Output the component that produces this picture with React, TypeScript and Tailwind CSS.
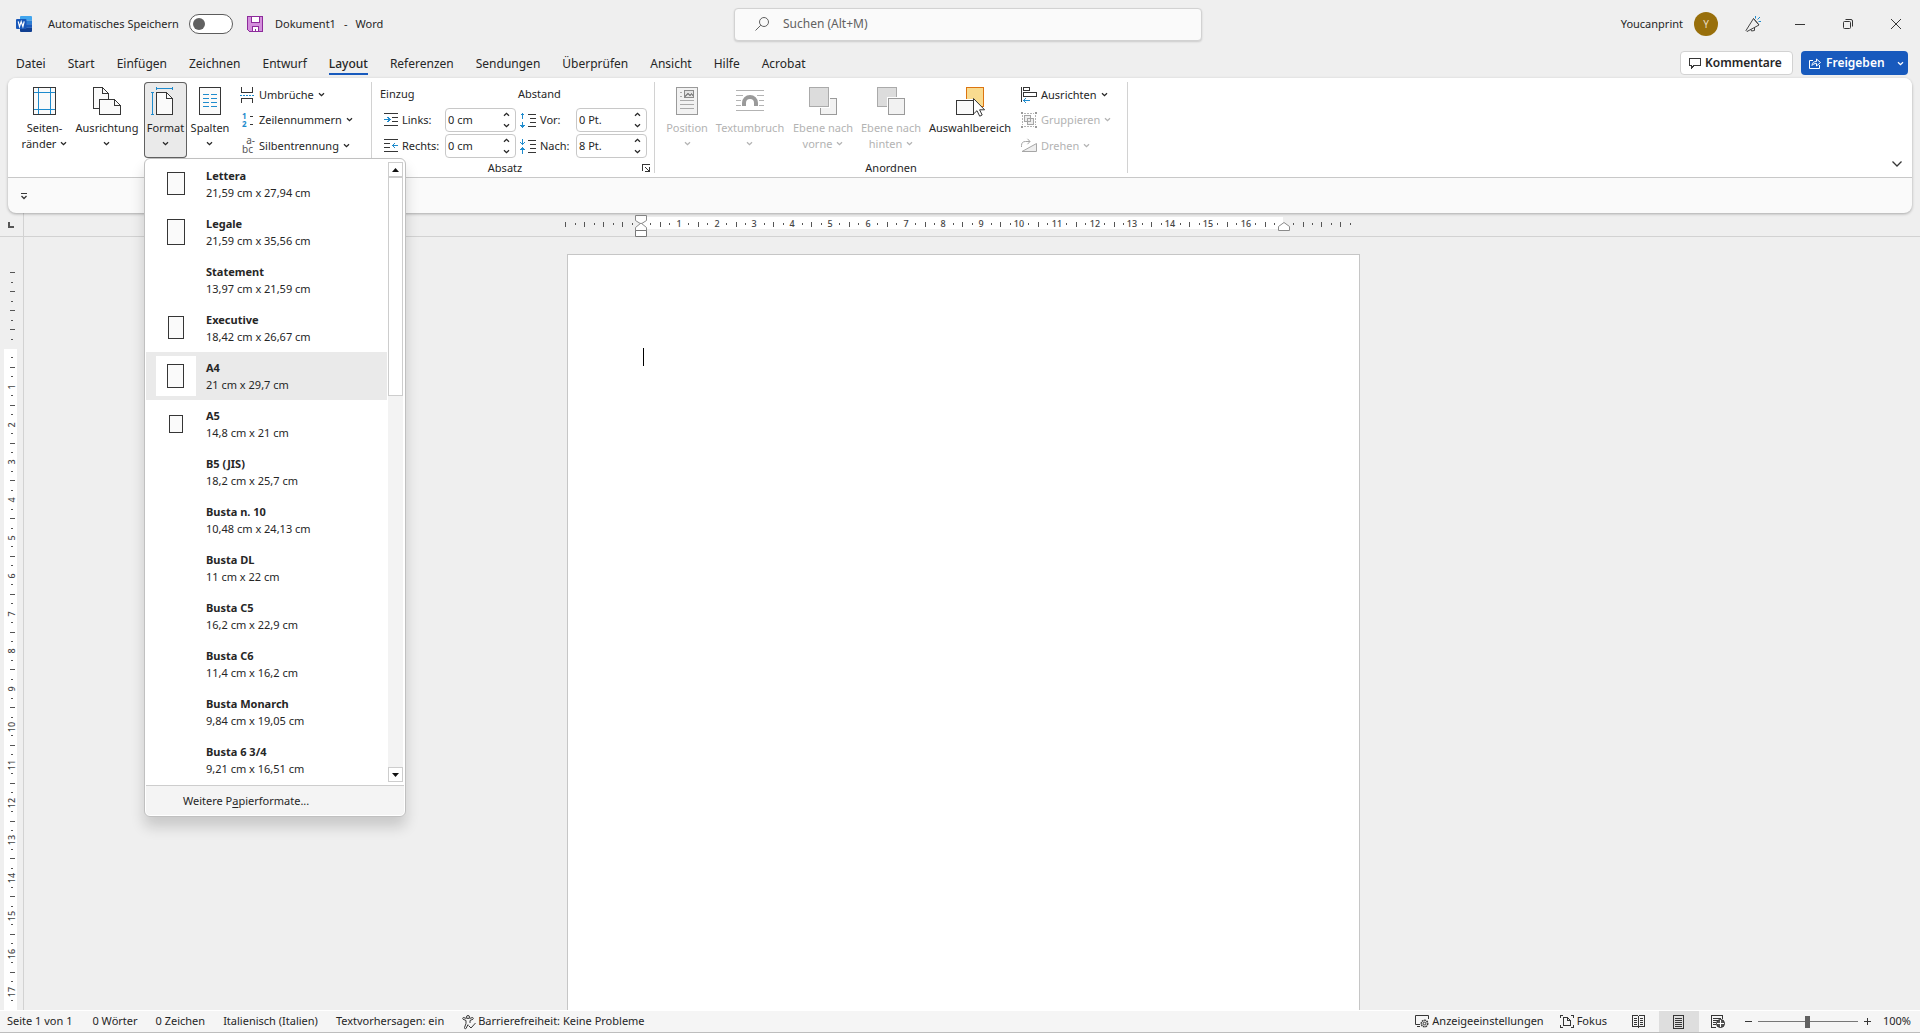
import clsx from "clsx";
import type { ReactNode } from "react";

const INK = "#363636";
const BLUE = "#1e8bcd";

const TABS = [
  "Datei",
  "Start",
  "Einfügen",
  "Zeichnen",
  "Entwurf",
  "Layout",
  "Referenzen",
  "Sendungen",
  "Überprüfen",
  "Ansicht",
  "Hilfe",
  "Acrobat",
];

interface PaperSize {
  name: string;
  size: string;
  icon?: [number, number];
}

const PAPER_SIZES: PaperSize[] = [
  { name: "Lettera", size: "21,59 cm x 27,94 cm", icon: [18, 23] },
  { name: "Legale", size: "21,59 cm x 35,56 cm", icon: [18, 26] },
  { name: "Statement", size: "13,97 cm x 21,59 cm" },
  { name: "Executive", size: "18,42 cm x 26,67 cm", icon: [16, 23] },
  { name: "A4", size: "21 cm x 29,7 cm", icon: [17, 24] },
  { name: "A5", size: "14,8 cm x 21 cm", icon: [14, 18] },
  { name: "B5 (JIS)", size: "18,2 cm x 25,7 cm" },
  { name: "Busta n. 10", size: "10,48 cm x 24,13 cm" },
  { name: "Busta DL", size: "11 cm x 22 cm" },
  { name: "Busta C5", size: "16,2 cm x 22,9 cm" },
  { name: "Busta C6", size: "11,4 cm x 16,2 cm" },
  { name: "Busta Monarch", size: "9,84 cm x 19,05 cm" },
  { name: "Busta 6 3/4", size: "9,21 cm x 16,51 cm" },
];

/* ---------- icons ---------- */

function Icon({
  w,
  h,
  children,
  crisp = true,
}: {
  w: number;
  h: number;
  children: ReactNode;
  crisp?: boolean;
}) {
  return (
    <svg
      width={w}
      height={h}
      viewBox={`0 0 ${w} ${h}`}
      fill="none"
      stroke={INK}
      shapeRendering={crisp ? "crispEdges" : "auto"}
      className="shrink-0 overflow-visible"
      aria-hidden="true"
    >
      {children}
    </svg>
  );
}

function Chevron({ up = false, className }: { up?: boolean; className?: string }) {
  return (
    <svg
      width="7"
      height="5"
      viewBox="0 0 7 5"
      fill="none"
      stroke="currentColor"
      strokeWidth="1.3"
      className={clsx("inline-block shrink-0", className)}
      aria-hidden="true"
    >
      <path d={up ? "M1 3.8 3.5 1.3 6 3.8" : "M1 1.2 3.5 3.7 6 1.2"} />
    </svg>
  );
}

const WordLogo = () => (
  <svg width="16" height="16" viewBox="0 0 16 16" className="shrink-0" aria-hidden="true">
    <path d="M4 1a1 1 0 0 1 1-1h10a1 1 0 0 1 1 1v3.5H4z" fill="#41a5ee" />
    <path d="M4 4.500h12v3.700H4z" fill="#2b7cd3" />
    <path d="M4 8.200h12v3.600H4z" fill="#185abd" />
    <path d="M4 11.800h12V15a1 1 0 0 1-1 1H5a1 1 0 0 1-1-1z" fill="#103f91" />
    <rect x="0" y="3" width="10.500" height="10" rx="1" fill="#1857b8" />
    <path d="m2.200 5.300 1.300 5.300 1.700-5 1.700 5 1.300-5.300" fill="none" stroke="#fff" strokeWidth="1.200" />
  </svg>
);

const SaveIcon = () => (
  <Icon w={16} h={16}>
    <path d="M.5.500h15v15h-13l-2-2z" fill="#d48fdc" stroke="#8d2b9b" />
    <path d="M4.500.500h8v6h-8z" fill="#fff" stroke="#8d2b9b" />
    <path d="M5.500 10.500h6v5h-6z" fill="#fff" stroke="#8d2b9b" />
    <path d="M8.500 12.500v3" stroke="#8d2b9b" />
  </Icon>
);

const MarginsIcon = () => (
  <Icon w={23} h={28}>
    <path d="M.5.500h22v27H.5z" fill="#fafafa" />
    <path d="M5.500 1v26M17.500 1v26M1 5.500h21M1 22.500h21" stroke={BLUE} />
  </Icon>
);

const OrientationIcon = () => (
  <Icon w={28} h={28}>
    <path d="M6 21.500H.5V.500h9l6 6V12" fill="#fafafa" />
    <path d="M9.500.500v6h6" />
    <path d="M6.500 12.500h15l6 6v9h-21z" fill="#fafafa" />
    <path d="M21.500 12.500v6h6" />
  </Icon>
);

const SizeIcon = () => (
  <Icon w={29} h={28}>
    <path d="M5.500 5.500h10l6 6v16h-16z" fill="#fafafa" />
    <path d="M15.500 5.500v6h6" />
    <path d="M5 1.500h17M5.500 0v3M21.500 0v3M1.500 5v23M0 5.500h3M0 27.500h3" stroke={BLUE} />
  </Icon>
);

const ColumnsIcon = () => (
  <Icon w={22} h={28}>
    <path d="M.5.500h21v27H.5z" fill="#fafafa" />
    <path
      d="M4 7.500h6M12 7.500h6M4 11.500h6M12 11.500h6M4 15.500h6M12 15.500h6M4 19.500h6M12 19.500h6"
      stroke={BLUE}
    />
  </Icon>
);

const BreaksIcon = () => (
  <Icon w={15} h={16}>
    <path d="M1.500 0v5.500h11V0M1.500 16v-4.500h11V16" />
    <path d="M0 8.500h14" stroke={BLUE} strokeDasharray="2 1" />
  </Icon>
);

const LineNumbersIcon = () => (
  <span className="flex w-[15px] justify-between pr-0.5 text-[8px] leading-2 font-bold text-[#1e8bcd]">
    <span className="flex flex-col pl-0.5">
      <span>1</span>
      <span>2</span>
    </span>
    <Icon w={4} h={16}>
      <path d="M1 4.500h3M1 12.500h3" />
    </Icon>
  </span>
);

const HyphenIcon = () => (
  <span className="flex w-[15px] flex-col text-[10px] leading-[9px] text-[#555]">
    <span className="text-right">a-</span>
    <span>bc</span>
  </span>
);

const IndentLeftIcon = () => (
  <Icon w={14} h={14}>
    <path d="M0 .500h14M8 4.500h6M8 8.500h6M0 12.500h14" />
    <path d="M0 6.500h6M3.500 4l2.500 2.500L3.500 9" stroke={BLUE} />
  </Icon>
);

const IndentRightIcon = () => (
  <Icon w={14} h={14}>
    <path d="M0 .500h14M0 4.500h6M0 8.500h6M0 12.500h14" />
    <path d="M14 6.500H8.500M11 4 8.500 6.500 11 9" stroke={BLUE} />
  </Icon>
);

const SpaceBeforeIcon = () => (
  <Icon w={16} h={14}>
    <path d="M8 1.500h8M10 5.500h6M10 9.500h6M8 13.500h8" />
    <path d="M2.500 6V.500M.5 2.500l2-2 2 2M2.500 9v5.500M.5 12l2 2 2-2" stroke={BLUE} />
  </Icon>
);

const SpaceAfterIcon = () => (
  <Icon w={16} h={14}>
    <path d="M8 1.500h8M10 5.500h6M10 9.500h6M8 13.500h8" />
    <path d="M2.500 0v5.500M.5 3.500l2 2 2-2M2.500 14.500V9M.5 11l2-2 2 2" stroke={BLUE} />
  </Icon>
);

const PositionIcon = () => (
  <Icon w={22} h={28}>
    <path d="M.5.500h21v27H.5z" fill="#f2f2f2" stroke="#9a9a9a" />
    <path d="M8.500 3.500h9v7h-9z" fill="#e2e2e2" stroke="#8a8a8a" />
    <path d="m9 9.500 3-3 2 2 1.500-1.500 2 2.500" stroke="#8a8a8a" />
    <path d="M4 5.500h2M4 9.500h2M4 13.500h14M4 17.500h14M4 21.500h14" stroke="#aaa" />
  </Icon>
);

const WrapIcon = () => (
  <Icon w={28} h={28}>
    <path d="M0 3.500h28M0 8.500h7M21 8.500h7M0 13.500h5M23 13.500h5M0 18.500h5M23 18.500h5M0 23.500h28" stroke="#b3b3b3" />
    <path
      d="M8 19v-3a6 6 0 0 1 12 0v3"
      stroke="#9a9a9a"
      strokeWidth="4"
      shapeRendering="auto"
    />
  </Icon>
);

const BringForwardIcon = () => (
  <Icon w={28} h={28}>
    <path d="M11.500 11.500h16v16h-16z" fill="#f2f2f2" stroke="#9a9a9a" />
    <path d="M0 0h21v21H0z" fill="#fff" stroke="none" />
    <path d="M.5.500h19v19H.5z" fill="#dcdcdc" stroke="#aaa" />
  </Icon>
);

const SendBackwardIcon = () => (
  <Icon w={28} h={28}>
    <path d="M.5.500h19v19H.5z" fill="#dcdcdc" stroke="#aaa" />
    <path d="M10 10h18v18H10z" fill="#fff" stroke="none" />
    <path d="M11.500 11.500h16v16h-16z" fill="#f2f2f2" stroke="#9a9a9a" />
  </Icon>
);

const SelectionPaneIcon = () => (
  <Icon w={29} h={28}>
    <path d="M10.500.500h17v19h-17z" fill="#f9db8f" stroke="#dc7410" />
    <path d="M0 12h19v17H0z" fill="#fff" stroke="none" />
    <path d="M.5 13.500h17v14H.5z" fill="#fafafa" />
    <path
      d="M17.500 11.500v15.500l3.500-3.300 2.700 5.500 2.500-1.200-2.600-5.200h5z"
      fill="#fff"
      shapeRendering="auto"
    />
  </Icon>
);

const AlignIcon = () => (
  <Icon w={16} h={16}>
    <path d="M.5 0v15M2.500.500h6v3h-6zM2.500 5.500h13v4h-13z" />
    <path d="M2.500 13.500H9M5 11l-2.500 2.500L5 16" stroke={BLUE} />
  </Icon>
);

const GroupIcon = () => (
  <Icon w={16} h={16}>
    <path d="M3 1.500h10M3 14.500h10M1.500 3v10M14.500 3v10" stroke="#b3b3b3" strokeDasharray="2 1" />
    <path d="M3.500 3.500h6v6h-6zM6.500 6.500h6v6h-6z" fill="#eee" stroke="#a6a6a6" />
    <path d="M0 1h2M14 1h2M0 15h2M14 15h2" stroke="#9a9a9a" strokeWidth="2" />
  </Icon>
);

const RotateIcon = () => (
  <Icon w={16} h={14} crisp={false}>
    <path d="M1 13.500h14.500v-8z" fill="#eee" stroke="#a6a6a6" />
    <path d="M.5 9V7.500a4 4 0 0 1 4-4H9M6.500.800 9 3.500 6.500 6.200" stroke="#a6a6a6" />
  </Icon>
);

/* ---------- title bar ---------- */

function TitleBar() {
  return (
    <header className="flex h-12 shrink-0 items-center pl-4">
      <div className="flex flex-1 items-center">
        <WordLogo />
        <label htmlFor="autosave" className="ml-4 w-[141px]">
          Automatisches Speichern
        </label>
        <input
          id="autosave"
          type="checkbox"
          role="switch"
          className="h-5 w-11 appearance-none rounded-full border border-[#5c5c5c] bg-white p-[3px] before:block before:size-3 before:rounded-full before:bg-[#616161]"
        />
        <button type="button" aria-label="Speichern" className="mr-3 ml-3.5">
          <SaveIcon />
        </button>
        <h1 className="flex gap-2 pt-px">
          <span>Dokument1</span>
          <span>-</span>
          <span>Word</span>
        </h1>
      </div>
      <div className="flex h-[33px] w-[468px] items-center gap-3.5 rounded-[4px] border border-[#d2d2d2] bg-[#fafafa] px-5 shadow-[0_1px_2px_rgba(0,0,0,0.15)]">
        <Icon w={14} h={14} crisp={false}>
          <circle cx="9" cy="5" r="4.500" stroke="#616161" />
          <path d="M5.800 8.200.500 13.500" stroke="#616161" />
        </Icon>
        <input
          type="search"
          aria-label="Suchen"
          placeholder="Suchen (Alt+M)"
          className="min-w-0 flex-1 bg-transparent text-[12px] outline-none placeholder:text-[#616161]"
        />
      </div>
      <div className="flex flex-1 items-center justify-end">
        <span>Youcanprint</span>
        <button
          type="button"
          aria-label="Konto"
          className="mr-[27px] ml-[11px] size-6 rounded-full bg-[#986f0b] text-[10px] text-[#e9dcc0]"
        >
          Y
        </button>
        <button type="button" aria-label="Demnächst verfügbar" className="mr-[15px]">
          <Icon w={16} h={16} crisp={false}>
            <path d="M8.500 2.500 1 14.500l1 1 12-6.500zM8.500 2.500l5.500 6.500M6 13.500l.500 1.500 3-.500V11.500" stroke="#444" />
            <path d="M10.500 0v2.500M12.500 3.500l2.500-2.500M13.500 5.500H16" stroke={BLUE} />
          </Icon>
        </button>
        <button type="button" aria-label="Minimieren" className="flex h-12 w-12 items-center justify-center">
          <Icon w={10} h={1}>
            <path d="M0 .500h10" />
          </Icon>
        </button>
        <button type="button" aria-label="Verkleinern" className="flex h-12 w-12 items-center justify-center">
          <Icon w={10} h={10} crisp={false}>
            <rect x=".5" y="2.500" width="7" height="7" rx="1" />
            <path d="M2.500.500H8A1.500 1.500 0 0 1 9.500 2v5.500" />
          </Icon>
        </button>
        <button type="button" aria-label="Schließen" className="flex h-12 w-12 items-center justify-center">
          <Icon w={10} h={10} crisp={false}>
            <path d="m0 0 10 10M10 0 0 10" />
          </Icon>
        </button>
      </div>
    </header>
  );
}

function TabRow() {
  return (
    <div className="flex h-[30px] shrink-0 items-start justify-between pr-3 pl-4">
      <nav className="flex gap-[22px] text-[12px]">
        {TABS.map((tab) => (
          <button
            key={tab}
            type="button"
            className={clsx(
              "flex h-[27px] items-center border-b-2 pt-[6px]",
              tab === "Layout"
                ? "border-[#185abd] font-medium"
                : "border-transparent",
            )}
          >
            {tab}
          </button>
        ))}
      </nav>
      <div className="flex gap-2 pt-[3px] text-[12px] font-semibold">
        <button
          type="button"
          className="flex h-6 w-[113px] items-center gap-1 rounded-[4px] border border-[#d2d2d2] bg-white pl-2"
        >
          <Icon w={12} h={11}>
            <path d="M.5.500h11v7H5l-2.500 2.500V7.500h-2z" />
          </Icon>
          Kommentare
        </button>
        <button
          type="button"
          className="flex h-6 w-[107px] items-center gap-[5px] rounded-[4px] bg-[#185abd] px-2 text-white"
        >
          <Icon w={12} h={12} crisp={false}>
            <path d="M4 3.500H.5v8h10V8" stroke="#fff" />
            <path d="M3 8.500c0-3 2-4 4.500-4V2l4 3.500-4 3.500V6.500C5.500 6.500 4 7 3 8.500z" stroke="#fff" />
          </Icon>
          Freigeben
          <Chevron className="ml-auto -mr-1" />
        </button>
      </div>
    </div>
  );
}

/* ---------- ribbon ---------- */

function BigButton({
  icon,
  lines,
  menu = true,
  disabled = false,
  className,
}: {
  icon: ReactNode;
  lines: string[];
  menu?: boolean;
  disabled?: boolean;
  className?: string;
}) {
  return (
    <button
      type="button"
      disabled={disabled}
      className={clsx(
        "flex h-[76px] flex-col items-center gap-[5px] rounded-[4px] pt-[5px] leading-4 whitespace-nowrap",
        disabled && "text-[#b3b3b3]",
        className,
      )}
    >
      {icon}
      <span className="flex flex-col items-center">
        <span>{lines[0]}</span>
        <span className="flex h-4 items-center gap-1">
          {lines[1]}
          {menu && <Chevron className="mb-0.5" />}
        </span>
      </span>
    </button>
  );
}

function SmallButton({
  icon,
  label,
  disabled = false,
}: {
  icon: ReactNode;
  label: string;
  disabled?: boolean;
}) {
  return (
    <button
      type="button"
      disabled={disabled}
      className={clsx(
        "flex h-[26px] items-center gap-1 whitespace-nowrap",
        disabled && "text-[#b3b3b3]",
      )}
    >
      {icon}
      <span className="pt-px">{label}</span>
      <Chevron />
    </button>
  );
}

function Spinner({ id, value }: { id: string; value: string }) {
  return (
    <div className="flex h-6 rounded-[4px] border border-[#c8c8c8] bg-white pl-0.5">
      <input
        id={id}
        type="text"
        defaultValue={value}
        className="w-0 min-w-0 flex-1 bg-transparent outline-none"
      />
      <div className="flex w-4 flex-col items-center justify-between py-[3px] pr-0.5">
        <button type="button" aria-label="Erhöhen" className="flex">
          <Chevron up />
        </button>
        <button type="button" aria-label="Verringern" className="flex">
          <Chevron />
        </button>
      </div>
    </div>
  );
}

function FieldLabel({
  htmlFor,
  icon,
  children,
}: {
  htmlFor: string;
  icon: ReactNode;
  children: string;
}) {
  return (
    <label htmlFor={htmlFor} className="flex items-center gap-1 pl-1 whitespace-nowrap">
      {icon}
      <span className="pt-px">{children}</span>
    </label>
  );
}

function ScrollButton({ down = false }: { down?: boolean }) {
  return (
    <button
      type="button"
      aria-label={down ? "Nach unten" : "Nach oben"}
      className="flex h-[15px] shrink-0 items-center justify-center border border-[#cdcdcd] bg-white"
    >
      <svg width="7" height="4" viewBox="0 0 7 4" aria-hidden="true">
        <path d={down ? "M0 0h7L3.500 4z" : "M0 4h7L3.500 0z"} fill="#111" />
      </svg>
    </button>
  );
}

function PaperIcon({ w, h }: { w: number; h: number }) {
  return (
    <Icon w={40} h={40}>
      <rect
        x={Math.floor((40 - w) / 2) + 0.5}
        y={Math.floor((40 - h) / 2) + 0.5}
        width={w - 1}
        height={h - 1}
        fill="#fafafa"
      />
    </Icon>
  );
}

function PaperMenu() {
  return (
    <div className="absolute top-full left-0 z-10 w-[262px] rounded-[6px] border border-[#c0c0c0] bg-white p-px shadow-[0_10px_14px_rgba(0,0,0,0.16)]">
      <div className="flex pr-px">
        <ul role="listbox" aria-label="Papierformat" className="flex-1">
          {PAPER_SIZES.map((paper) => {
            const active = paper.name === "A4";
            return (
              <li key={paper.name} role="option" aria-selected={active}>
                <button
                  type="button"
                  className={clsx(
                    "flex h-12 w-full items-center gap-2.5 pl-2.5 text-left",
                    active && "bg-[#eaeaea]",
                  )}
                >
                  <span className={clsx("size-10 shrink-0", active && "bg-white")}>
                    {paper.icon && <PaperIcon w={paper.icon[0]} h={paper.icon[1]} />}
                  </span>
                  <span className="flex flex-col leading-[17px]">
                    <span className="font-bold">{paper.name}</span>
                    <span>{paper.size}</span>
                  </span>
                </button>
              </li>
            );
          })}
        </ul>
        <div className="my-0.5 ml-px flex w-[15px] flex-col bg-[#f3f3f3]">
          <ScrollButton />
          <div className="h-[219px] border border-[#cdcdcd] bg-white" />
          <div className="flex-1" />
          <ScrollButton down />
        </div>
      </div>
      <button
        type="button"
        className="mt-px flex h-[30px] w-full items-center rounded-b-[4px] border-t border-[#cdcdcd] bg-[#f4f4f4] pt-px pl-[37px]"
      >
        <span>
          Weitere P<u className="underline-offset-2">a</u>pierformate...
        </span>
      </button>
    </div>
  );
}

function RibbonGroup({
  label,
  launcher = false,
  className,
  children,
}: {
  label?: string;
  launcher?: boolean;
  className?: string;
  children: ReactNode;
}) {
  return (
    <section
      aria-label={label}
      className={clsx("flex h-[91px] shrink-0 flex-col border-r border-[#d2d2d2]", className)}
    >
      {children}
      <div className="flex h-5 shrink-0 items-center">
        <span className="flex-1 text-center">{label}</span>
        {launcher && (
          <button type="button" aria-label="Absatzeinstellungen" className="w-4 pl-1">
            <Icon w={8} h={8}>
              <path d="M.5 7V.500H8M3 3l4 4M7.500 3v4.500H3" />
            </Icon>
          </button>
        )}
      </div>
    </section>
  );
}

function Ribbon() {
  return (
    <div className="relative z-10 mx-2 shrink-0 rounded-lg bg-[#fafafa] shadow-[0_1px_3px_rgba(0,0,0,0.3)]">
      <div className="flex h-[100px] rounded-t-lg border-b border-[#c8c8c8] bg-white pt-1">
        <RibbonGroup className="w-[364px]">
          <div className="flex h-[76px] pl-[7px]">
            <BigButton icon={<MarginsIcon />} lines={["Seiten-", "ränder"]} className="w-[59px]" />
            <BigButton icon={<OrientationIcon />} lines={["Ausrichtung"]} className="w-[66px]" />
            <div className="relative ml-1">
              <BigButton
                icon={<SizeIcon />}
                lines={["Format"]}
                className="w-[43px] bg-[#eaeaea] ring-1 ring-[#616161] ring-inset"
              />
              <PaperMenu />
            </div>
            <BigButton icon={<ColumnsIcon />} lines={["Spalten"]} className="w-[46px]" />
            <div className="flex flex-col pl-[7px]">
              <SmallButton icon={<BreaksIcon />} label="Umbrüche" />
              <SmallButton icon={<LineNumbersIcon />} label="Zeilennummern" />
              <SmallButton icon={<HyphenIcon />} label="Silbentrennung" />
            </div>
          </div>
        </RibbonGroup>

        <RibbonGroup label="Absatz" launcher className="w-[283px]">
          <div className="grid h-[76px] grid-cols-[65px_71px_60px_71px] grid-rows-[24px_24px_24px] gap-y-0.5 pl-2">
            <span className="col-span-2 flex items-center pt-px">Einzug</span>
            <span className="col-span-2 flex items-center pt-px pl-0.5">Abstand</span>
            <FieldLabel htmlFor="indent-left" icon={<IndentLeftIcon />}>
              Links:
            </FieldLabel>
            <Spinner id="indent-left" value="0 cm" />
            <FieldLabel htmlFor="space-before" icon={<SpaceBeforeIcon />}>
              Vor:
            </FieldLabel>
            <Spinner id="space-before" value="0 Pt." />
            <FieldLabel htmlFor="indent-right" icon={<IndentRightIcon />}>
              Rechts:
            </FieldLabel>
            <Spinner id="indent-right" value="0 cm" />
            <FieldLabel htmlFor="space-after" icon={<SpaceAfterIcon />}>
              Nach:
            </FieldLabel>
            <Spinner id="space-after" value="8 Pt." />
          </div>
        </RibbonGroup>

        <RibbonGroup label="Anordnen" className="w-[473px]">
          <div className="flex h-[76px] gap-1 pl-2.5">
            <BigButton disabled icon={<PositionIcon />} lines={["Position"]} className="w-11" />
            <BigButton disabled icon={<WrapIcon />} lines={["Textumbruch"]} className="w-[74px]" />
            <BigButton disabled icon={<BringForwardIcon />} lines={["Ebene nach", "vorne"]} className="w-16" />
            <BigButton disabled icon={<SendBackwardIcon />} lines={["Ebene nach", "hinten"]} className="w-16" />
            <BigButton icon={<SelectionPaneIcon />} lines={["Auswahlbereich"]} menu={false} className="w-[86px]" />
            <div className="flex flex-col pl-1">
              <SmallButton icon={<AlignIcon />} label="Ausrichten" />
              <SmallButton disabled icon={<GroupIcon />} label="Gruppieren" />
              <SmallButton disabled icon={<RotateIcon />} label="Drehen" />
            </div>
          </div>
        </RibbonGroup>

        <button type="button" aria-label="Menüband ausblenden" className="mr-2.5 mb-2.5 ml-auto self-end">
          <Icon w={10} h={6} crisp={false}>
            <path d="m.5.500 4.500 4.500L9.500.500" strokeWidth="1.300" />
          </Icon>
        </button>
      </div>
      <div className="flex h-[35px] items-center pl-3">
        <button type="button" aria-label="Symbolleiste anpassen">
          <Icon w={8} h={8} crisp={false}>
            <path d="M1 1.500h6" />
            <path d="m1.500 4 2.500 2.500L6.500 4" strokeWidth="1.300" />
          </Icon>
        </button>
      </div>
    </div>
  );
}

/* ---------- rulers and page ---------- */

const QUARTER_CM = 9.45;
const range = (from: number, to: number) =>
  Array.from({ length: to - from + 1 }, (_, i) => from + i);

function HorizontalRuler() {
  return (
    <svg
      width="793"
      height="22"
      className="shrink-0 overflow-visible text-[9px] font-medium"
      aria-label="Lineal"
    >
      <rect x="74" y="3" width="642" height="12" fill="#fff" />
      {range(-8, 75).map((k) => {
        if (k === 0 || k === 68) return null;
        const x = Math.round(74 + k * QUARTER_CM);
        if (k > 0 && k < 68 && k % 4 === 0)
          return (
            <text key={k} x={x} y="13" textAnchor="middle" fill="#444">
              {k / 4}
            </text>
          );
        return k % 2 === 0 ? (
          <rect key={k} x={x} y="8" width="1" height="5" fill="#555" />
        ) : (
          <rect key={k} x={x} y="9" width="1" height="2" fill="#555" />
        );
      })}
      <path d="M68.500 1.500h11v5L74 10l-5.500-3.500z" fill="#fff" stroke="#8a8a8a" />
      <path d="M68.500 16.500v-3L74 9l5.500 4.500v3z" fill="#fff" stroke="#8a8a8a" />
      <path d="M68.500 16.500h11v6h-11z" fill="#fff" stroke="#777" />
      <path d="M711.500 16.500v-4L717 8.500l5.500 4v4z" fill="#fff" stroke="#8a8a8a" />
    </svg>
  );
}

function VerticalRuler() {
  return (
    <div className="w-6 shrink-0 overflow-hidden border-r border-[#d2d2d2]">
      <svg width="23" height="100%" className="text-[9px] font-medium" aria-label="Vertikales Lineal">
        <rect x="4" y="112" width="13" height="100%" fill="#fff" />
        {range(-8, 70).map((k) => {
          if (k === 0) return null;
          const y = Math.round(112 + k * QUARTER_CM);
          if (k > 0 && k % 4 === 0)
            return (
              <text key={k} transform={`translate(15 ${y}) rotate(-90)`} textAnchor="middle" fill="#444">
                {k / 4}
              </text>
            );
          return k % 2 === 0 ? (
            <rect key={k} x="10" y={y - 1} width="5" height="1" fill="#555" />
          ) : (
            <rect key={k} x="11" y={y - 1} width="2" height="1" fill="#555" />
          );
        })}
      </svg>
    </div>
  );
}

function Workspace() {
  return (
    <main className="flex min-h-0 flex-1 flex-col">
      <div className="flex h-6 shrink-0 border-b border-[#d2d2d2]">
        <div className="flex w-6 shrink-0 items-center border-r border-[#d2d2d2] pl-2">
          <Icon w={6} h={6}>
            <path d="M1 0v5h5" stroke="#555" strokeWidth="2" />
          </Icon>
        </div>
        <div className="flex flex-1 justify-center pt-px pr-[17px]">
          <HorizontalRuler />
        </div>
      </div>
      <div className="flex min-h-0 flex-1">
        <VerticalRuler />
        <div className="flex min-h-0 flex-1 justify-center overflow-hidden pt-[17px] pr-[17px]">
          <article
            aria-label="Seite 1"
            className="w-[793px] shrink-0 border border-b-0 border-[#c6c6c6] bg-white px-[75px] pt-[93px]"
          >
            <div className="h-[18px] w-px bg-black" />
          </article>
        </div>
      </div>
    </main>
  );
}

/* ---------- status bar ---------- */

function StatusBar() {
  return (
    <footer className="flex h-[23px] shrink-0 items-stretch justify-between border-t border-b border-t-white border-b-[#bdbdbd] bg-[#f5f5f5] whitespace-nowrap">
      <div className="flex items-center gap-[18px] pl-[7px]">
        <button type="button" className="mr-0.5">Seite 1 von 1</button>
        <button type="button">0 Wörter</button>
        <button type="button">0 Zeichen</button>
        <button type="button">Italienisch (Italien)</button>
        <button type="button">Textvorhersagen: ein</button>
        <button type="button" className="flex items-center gap-0.5">
          <Icon w={14} h={14} crisp={false}>
            <circle cx="6" cy="2" r="1.500" />
            <path d="M4.500 3.500 1.500 2.500a1 1 0 0 0-.500 1.700L4 5.500v3L2.500 12.500a.9.900 0 0 0 1.700.700L6 9.500M7.500 3.500l3-1a1 1 0 0 1 .5 1.700L8 5.500V8M6.500 10.500l2.500 2.500 4.500-5" />
          </Icon>
          Barrierefreiheit: Keine Probleme
        </button>
      </div>
      <div className="flex items-center pr-[9px]">
        <button type="button" className="mr-4 flex items-center gap-[3px]">
          <Icon w={14} h={13} crisp={false}>
            <path d="M5 9.500H.5v-9h13V4M2 11.500h3" />
            <circle cx="9.500" cy="8.500" r="1.300" />
            <circle cx="9.500" cy="8.500" r="3.200" strokeDasharray="1.700 .7" strokeWidth="1.600" />
          </Icon>
          Anzeigeeinstellungen
        </button>
        <button type="button" className="mr-[25px] flex items-center gap-[3px]">
          <Icon w={14} h={13}>
            <path d="M0 3V.500h3M11 .500h2.500V3M13.500 10v2.500H11M3 12.500H.5V10" />
            <path d="M3.500 2.500h4l3 3v5h-7zM7.500 2.500v3h3" />
          </Icon>
          Fokus
        </button>
        <button type="button" aria-label="Lesemodus" className="mr-3.5">
          <Icon w={13} h={13}>
            <path d="M.5.500h5l1 1 1-1h5v11h-5l-1 1-1-1h-5zM6.500 1v11M2 3.500h3M2 5.500h3M2 7.500h3M2 9.500h3M8 3.500h3M8 5.500h3M8 7.500h3M8 9.500h3" />
          </Icon>
        </button>
        <button type="button" aria-label="Seitenlayout" className="mr-3 flex h-full w-10 items-center justify-center bg-[#dedede]">
          <Icon w={11} h={14}>
            <path d="M.5.500h10v13H.5zM2 3.500h7M2 5.500h7M2 7.500h7M2 9.500h7M2 11.500h7" />
          </Icon>
        </button>
        <button type="button" aria-label="Weblayout" className="mr-5">
          <Icon w={14} h={13}>
            <path d="M5 12.500H.5V.500h11V4M2 3.500h8M2 5.500h5M2 7.500h3M2 9.500h3" />
            <circle cx="9.500" cy="8.500" r="4" fill="#555" shapeRendering="auto" />
            <path d="M6 8.500h7M9.500 5v7" stroke="#fff" />
          </Icon>
        </button>
        <button type="button" aria-label="Verkleinern" className="py-2">
          <Icon w={7} h={1}>
            <path d="M0 .500h7" />
          </Icon>
        </button>
        <input
          type="range"
          aria-label="Zoom"
          defaultValue={50}
          className="mx-1.5 h-3 w-[100px] appearance-none bg-transparent bg-[linear-gradient(#777,#777)] bg-[length:100%_1px] bg-center bg-no-repeat [&::-webkit-slider-thumb]:h-3 [&::-webkit-slider-thumb]:w-[5px] [&::-webkit-slider-thumb]:appearance-none [&::-webkit-slider-thumb]:bg-[#616161]"
        />
        <button type="button" aria-label="Vergrößern" className="mr-3">
          <Icon w={7} h={7}>
            <path d="M0 3.500h7M3.500 0v7" />
          </Icon>
        </button>
        <button type="button">100%</button>
      </div>
    </footer>
  );
}

export default function App() {
  return (
    <div className="flex h-screen min-h-0 flex-col overflow-hidden bg-[#efefef] font-['Noto_Sans','Open_Sans',sans-serif] text-[11px] text-[#262626]">
      <TitleBar />
      <TabRow />
      <Ribbon />
      <Workspace />
      <StatusBar />
    </div>
  );
}
